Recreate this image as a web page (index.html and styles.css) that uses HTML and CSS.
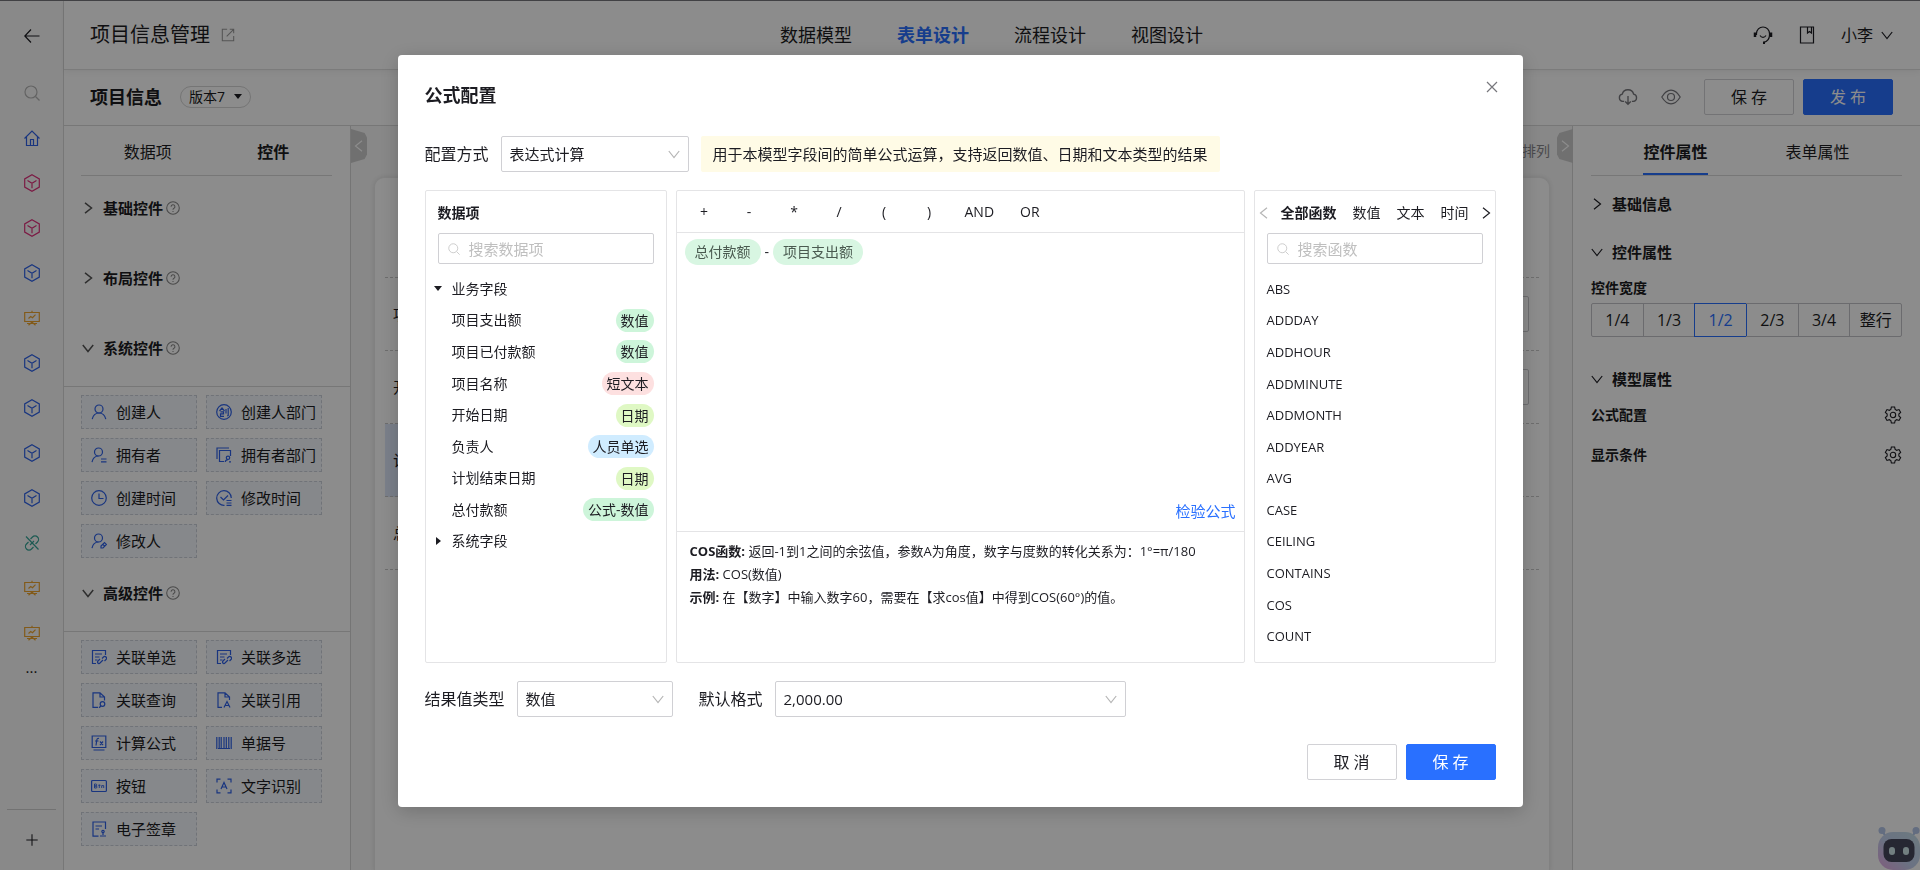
FILE: index.html
```html
<!DOCTYPE html>
<html lang="zh-CN">
<head>
  <meta charset="UTF-8">
  <meta name="viewport" content="width=device-width, initial-scale=1.0">
  <title>项目信息管理</title>
  <link rel="stylesheet" href="styles.css">
</head>

<body>
  <!-- icon set -->
  <svg class="sprite" aria-hidden="true">
    <symbol id="back" viewBox="0 0 16 16"><path d="M15.5 8H1M7 1.5L.8 8 7 14.500"/></symbol>
    <symbol id="search" viewBox="0 0 16 16"><circle cx="7" cy="7" r="6"/><path d="M11.500 11.500l4 4"/></symbol>
    <symbol id="home" viewBox="0 0 16 16"><path d="M.5 8.500L8 1l7.500 7.500M2.500 7v8.500h11V7M6.500 15.500V9.500h3v6"/></symbol>
    <symbol id="cube" viewBox="0 0 16 18"><path d="M8 .8l7.300 4.100v8.200L8 17.200.7 13.100V4.900zM3.500 6.500L8 9.200l4.500-2.700M8 9.200v5"/></symbol>
    <symbol id="board" viewBox="0 0 16 16"><path d="M.7 2.500h14.600v9H.7zM8 .8v1.700M4.500 8.500l2.200-2 1.800 1.200 3-3M4.500 15.200L8 12l3.500 3.200M3 13.500h10"/></symbol>
    <symbol id="unlink" viewBox="0 0 16 16"><path d="M6.500 4l2-2a3.500 3.500 0 0 1 5 5l-2 2M9.500 12l-2 2a3.500 3.500 0 0 1-5-5l2-2M2 1.500l12.500 13M6 10l4-4"/></symbol>
    <symbol id="plus" viewBox="0 0 16 16"><path d="M8 1.500v13M1.500 8h13"/></symbol>
    <symbol id="external" viewBox="0 0 16 16"><path d="M7 1.500H1.500v13h13V9M10 1.500h4.500V6M6.500 9.500l8-8"/></symbol>
    <symbol id="down" viewBox="0 0 12 12"><path d="M.8 3l5.200 6.500L11.200 3"/></symbol>
    <symbol id="right" viewBox="0 0 12 12"><path d="M3 .8L9.500 6 3 11.200"/></symbol>
    <symbol id="left" viewBox="0 0 12 12"><path d="M9 .8L2.500 6 9 11.200"/></symbol>
    <symbol id="close" viewBox="0 0 12 12"><path d="M1 1l10 10M11 1L1 11"/></symbol>
    <symbol id="help" viewBox="0 0 16 16"><circle cx="8" cy="8" r="7.200"/><path d="M5.800 6.500a2.200 2.200 0 1 1 3 2c-.6.300-.8.700-.8 1.500M8 11.300v1.200"/></symbol>
    <symbol id="headset" viewBox="0 0 20 18"><path d="M3.500 9V7.500a6.500 6.500 0 0 1 13 0V9c0 4-2.500 6.500-5.500 7.500M7 9.500c1.500 2.500 4.500 2.500 6 0"/><path d="M2 6.500v4.500M18 6.500v4.500M10 16.800h2" stroke-width="2.500"/></symbol>
    <symbol id="book" viewBox="0 0 16 18"><path d="M1.500 1h13v16h-13zM8.500 1v6l2-1.500 2 1.500V1"/></symbol>
    <symbol id="cloud" viewBox="0 0 18 15"><path d="M5.500 11.500H4.200a3.300 3.300 0 0 1-.4-6.500 5.300 5.300 0 0 1 10.300 0 3.300 3.300 0 0 1-.3 6.500h-1.300M9 6.500V14M6.500 11.500L9 14l2.500-2.500"/></symbol>
    <symbol id="eye" viewBox="0 0 20 16"><path d="M.8 8C3.500 3.500 6.500 1.200 10 1.200S16.500 3.500 19.200 8c-2.700 4.500-5.700 6.800-9.200 6.800S3.500 12.500.8 8z"/><circle cx="10" cy="8" r="3.500"/></symbol>
    <symbol id="gear" viewBox="0 0 20 20"><path d="M8.200 1.200h3.600l.6 2.600 1.700 1 2.600-.8 1.800 3.100-2 1.900v2l2 1.900-1.800 3.100-2.600-.8-1.700 1-.6 2.600H8.200l-.6-2.600-1.700-1-2.600.8-1.800-3.100 2-1.900V9l-2-1.900L3.300 4l2.600.8 1.700-1z"/><circle cx="10" cy="10" r="3"/></symbol>
    <symbol id="user" viewBox="0 0 16 16"><circle cx="8" cy="5" r="4"/><path d="M1.200 15.200C2 11.500 4.500 9 8 9s6 2.500 6.800 6.200"/></symbol>
    <symbol id="user-list" viewBox="0 0 16 16"><circle cx="7.500" cy="5" r="4"/><path d="M1 15.200C1.700 11.500 4 9 7.500 9M10 12h5.500M10 14.800h5.500"/></symbol>
    <symbol id="user-edit" viewBox="0 0 16 16"><circle cx="7.500" cy="5" r="4"/><path d="M1 15.200C1.700 11.500 4 9 7.500 9M10 15v-2l3.500-3.500 2 2L12 15zM12 11.500l1.800 1.800"/></symbol>
    <symbol id="dept" viewBox="0 0 16 16"><circle cx="8" cy="8" r="7.300"/><path d="M3.500 7L6 4l2.500 3M4.500 7.800h3v2h-3v2.500H8M10 5v4.500M12.200 4v7.500l-1 .6"/></symbol>
    <symbol id="dept-user" viewBox="0 0 16 16"><path d="M1 12V1h12M8 14.500H3.500v-11h11V9"/><circle cx="12" cy="10.800" r="1.700"/><path d="M9.200 15c.3-1.500 1.300-2.400 2.800-2.400M13 14.800h2"/></symbol>
    <symbol id="clock" viewBox="0 0 16 16"><circle cx="8" cy="8" r="7.300"/><path d="M8 3.500V8.500h4.500"/></symbol>
    <symbol id="clock-edit" viewBox="0 0 16 16"><path d="M8.500 15.300A7.300 7.300 0 1 1 15.300 8M4.500 7l3 3 4.500-4.500M10.500 10.500h5M10.500 13h5M10.500 15.300h5"/></symbol>
    <symbol id="form-link" viewBox="0 0 16 16"><path d="M5 14.500H1.500v-13h13V6M4 5h7M4 8h4.500M4 11h2.500"/><path d="M11 9.500l1.500-1.500a1.700 1.700 0 0 1 2.500 2.500l-1.500 1.500M12 11l-3.500 3.500a1.500 1.500 0 0 1-1.500-2.500l2-2"/></symbol>
    <symbol id="doc-search" viewBox="0 0 16 16"><path d="M7 15.300H2V.8h7L13.500 5v3.500M9 .8V5h4.500"/><circle cx="11.500" cy="12" r="2.300"/><path d="M10 14l-2 1.800"/></symbol>
    <symbol id="doc-a" viewBox="0 0 16 16"><path d="M6 15.300H2V.8h7L13.500 5v3M9 .8V5h4.500M8 15.500l3-6 3 6M9 13.500h4"/></symbol>
    <symbol id="fx" viewBox="0 0 16 16"><path d="M1.200 1h13.600v11.500H1.200zM2.500 15h11M8 3.500c-1.500-.5-2 .3-2.200 1.500L5 10.500M4 6h3.500M9 6.500l3 3.500M12 6.500L9 10"/></symbol>
    <symbol id="barcode" viewBox="0 0 16 16"><path d="M.8 2v12M3.200 2v12M5.200 2v12M8 2v12M10.300 2v12M12.800 2v12M15.200 2v12M2 13.500h12" stroke-width="1.200"/></symbol>
    <symbol id="btn" viewBox="0 0 16 16"><rect x=".6" y="2.500" width="14.800" height="11" rx="1"/><path stroke-width=".9" d="M3.500 6v4h1.500a1 1 0 0 0 0-2H3.500h1.300a1 1 0 0 0 0-2zM8.300 6.500v3.500M7.300 7.300h2.200M10.700 10V7.600h2V10"/></symbol>
    <symbol id="ocr" viewBox="0 0 16 16"><path d="M1 4.500V1.200h3.500M11.500 1.200H15v3.300M15 11.500v3.300h-3.500M4.500 14.800H1v-3.300M5 11l3-6.500L11 11M6 9h4"/></symbol>
    <symbol id="seal" viewBox="0 0 16 16"><path d="M7.500 15.200H2V1h12.500v7M4.500 5H11M4.500 8H8M9 15h6M12 14v-3"/><circle cx="12" cy="10.500" r="1.200"/></symbol>
  </svg>

  <div class="app">
    <nav class="rail">
      <a href="#" class="rail-back" aria-label="返回"><svg class="icon"><use href="#back"/></svg></a>
      <a href="#" class="rail-item muted" aria-label="搜索"><svg class="icon"><use href="#search"/></svg></a>
      <a href="#" class="rail-item blue" aria-label="首页"><svg class="icon"><use href="#home"/></svg></a>
      <a href="#" class="rail-item pink" aria-label="模型"><svg class="icon icon-cube"><use href="#cube"/></svg></a>
      <a href="#" class="rail-item pink" aria-label="模型"><svg class="icon icon-cube"><use href="#cube"/></svg></a>
      <a href="#" class="rail-item blue" aria-label="模型"><svg class="icon icon-cube"><use href="#cube"/></svg></a>
      <a href="#" class="rail-item orange" aria-label="报表"><svg class="icon"><use href="#board"/></svg></a>
      <a href="#" class="rail-item blue" aria-label="模型"><svg class="icon icon-cube"><use href="#cube"/></svg></a>
      <a href="#" class="rail-item blue" aria-label="模型"><svg class="icon icon-cube"><use href="#cube"/></svg></a>
      <a href="#" class="rail-item blue" aria-label="模型"><svg class="icon icon-cube"><use href="#cube"/></svg></a>
      <a href="#" class="rail-item blue" aria-label="模型"><svg class="icon icon-cube"><use href="#cube"/></svg></a>
      <a href="#" class="rail-item teal" aria-label="链接"><svg class="icon"><use href="#unlink"/></svg></a>
      <a href="#" class="rail-item orange" aria-label="报表"><svg class="icon"><use href="#board"/></svg></a>
      <a href="#" class="rail-item orange" aria-label="报表"><svg class="icon"><use href="#board"/></svg></a>
      <a href="#" class="rail-more">...</a>
      <button class="rail-add" aria-label="新增"><svg class="icon icon-14"><use href="#plus"/></svg></button>
    </nav>

    <div class="main">
      <header class="topbar">
        <div class="app-title">项目信息管理 <svg class="icon icon-14"><use href="#external"/></svg></div>
        <nav class="steps">
          <a href="#">数据模型</a>
          <a href="#" class="active">表单设计</a>
          <a href="#">流程设计</a>
          <a href="#">视图设计</a>
        </nav>
        <div class="top-tools">
          <svg class="icon icon-wide"><use href="#headset"/></svg>
          <svg class="icon icon-cube"><use href="#book"/></svg>
          <a href="#" class="user">小李 <svg class="icon icon-12"><use href="#down"/></svg></a>
        </div>
      </header>

      <div class="subbar">
        <h1>项目信息</h1>
        <button class="version">版本7 <span class="caret-down"></span></button>
        <div class="sub-tools">
          <svg class="icon icon-wide"><use href="#cloud"/></svg>
          <svg class="icon icon-wide"><use href="#eye"/></svg>
          <button class="btn">保 存</button>
          <button class="btn btn-primary">发 布</button>
        </div>
      </div>

      <div class="workspace">
        <aside class="widgets">
          <div class="widget-tabs">
            <a href="#">数据项</a>
            <a href="#" class="active">控件</a>
          </div>
          <h2 class="group-head"><svg class="icon icon-12"><use href="#right"/></svg>基础控件<svg class="icon icon-14"><use href="#help"/></svg></h2>
          <h2 class="group-head"><svg class="icon icon-12"><use href="#right"/></svg>布局控件<svg class="icon icon-14"><use href="#help"/></svg></h2>
          <h2 class="group-head"><svg class="icon icon-12"><use href="#down"/></svg>系统控件<svg class="icon icon-14"><use href="#help"/></svg></h2>
          <div class="group-body">
            <button class="widget"><svg class="icon"><use href="#user"/></svg>创建人</button>
            <button class="widget"><svg class="icon"><use href="#dept"/></svg>创建人部门</button>
            <button class="widget"><svg class="icon"><use href="#user-list"/></svg>拥有者</button>
            <button class="widget"><svg class="icon"><use href="#dept-user"/></svg>拥有者部门</button>
            <button class="widget"><svg class="icon"><use href="#clock"/></svg>创建时间</button>
            <button class="widget"><svg class="icon"><use href="#clock-edit"/></svg>修改时间</button>
            <button class="widget"><svg class="icon"><use href="#user-edit"/></svg>修改人</button>
          </div>
          <h2 class="group-head"><svg class="icon icon-12"><use href="#down"/></svg>高级控件<svg class="icon icon-14"><use href="#help"/></svg></h2>
          <div class="group-body">
            <button class="widget"><svg class="icon"><use href="#form-link"/></svg>关联单选</button>
            <button class="widget"><svg class="icon"><use href="#form-link"/></svg>关联多选</button>
            <button class="widget"><svg class="icon"><use href="#doc-search"/></svg>关联查询</button>
            <button class="widget"><svg class="icon"><use href="#doc-a"/></svg>关联引用</button>
            <button class="widget"><svg class="icon"><use href="#fx"/></svg>计算公式</button>
            <button class="widget"><svg class="icon"><use href="#barcode"/></svg>单据号</button>
            <button class="widget"><svg class="icon"><use href="#btn"/></svg>按钮</button>
            <button class="widget"><svg class="icon"><use href="#ocr"/></svg>文字识别</button>
            <button class="widget"><svg class="icon"><use href="#seal"/></svg>电子签章</button>
          </div>
        </aside>

        <section class="canvas">
          <button class="fold fold-left" aria-label="收起"><svg class="icon icon-12"><use href="#left"/></svg></button>
          <button class="fold fold-right" aria-label="收起"><svg class="icon icon-12"><use href="#right"/></svg></button>
          <div class="canvas-bar">排列</div>
          <div class="form-card">
            <div class="form-grid">
              <label class="cell">项目名称 <input type="text"></label>
              <label class="cell">项目支出额 <input type="text"></label>
              <label class="cell">开始日期 <input type="text"></label>
              <label class="cell">计划结束日期 <input type="text"></label>
              <div class="cell selected">计算公式</div>
              <div class="cell"></div>
              <div class="cell">总付款额</div>
              <div class="cell"></div>
            </div>
          </div>
        </section>

        <aside class="props">
          <div class="prop-tabs">
            <a href="#" class="active">控件属性</a>
            <a href="#">表单属性</a>
          </div>
          <h2 class="prop-head"><svg class="icon icon-12"><use href="#right"/></svg>基础信息</h2>
          <h2 class="prop-head"><svg class="icon icon-12"><use href="#down"/></svg>控件属性</h2>
          <div class="prop-name">控件宽度</div>
          <div class="widths">
            <label><input type="radio" name="width">1/4</label>
            <label><input type="radio" name="width">1/3</label>
            <label><input type="radio" name="width" checked>1/2</label>
            <label><input type="radio" name="width">2/3</label>
            <label><input type="radio" name="width">3/4</label>
            <label><input type="radio" name="width">整行</label>
          </div>
          <h2 class="prop-head"><svg class="icon icon-12"><use href="#down"/></svg>模型属性</h2>
          <div class="prop-row">公式配置 <button aria-label="公式配置"><svg class="icon icon-18"><use href="#gear"/></svg></button></div>
          <div class="prop-row">显示条件 <button aria-label="显示条件"><svg class="icon icon-18"><use href="#gear"/></svg></button></div>
        </aside>
      </div>
    </div>
  </div>

  <svg class="robot" viewBox="0 0 42 43" aria-hidden="true">
    <defs>
      <linearGradient id="shell" x1="0" y1="1" x2="1" y2="0">
        <stop offset="0" stop-color="#e9a8e4"/>
        <stop offset=".45" stop-color="#c3d0ee"/>
        <stop offset="1" stop-color="#c6dfe9"/>
      </linearGradient>
    </defs>
    <path d="M4 4l5 7M38 4l-5 7" stroke="#a9bfe6" stroke-width="2"/>
    <circle cx="4" cy="3.500" r="3.500" fill="#b5c6ea"/>
    <circle cx="38" cy="3.500" r="3.500" fill="#b5c6ea"/>
    <rect x="0" y="5" width="42" height="38" rx="15" fill="url(#shell)"/>
    <rect x="5.500" y="12" width="31" height="23" rx="8" fill="#46475c"/>
    <rect x="11" y="20" width="6" height="8" rx="3" fill="#cfe7ea"/>
    <rect x="25" y="20" width="6" height="8" rx="3" fill="#cfe7ea"/>
  </svg>

  <div class="mask">
    <div class="modal" role="dialog" aria-labelledby="modalTitle">
      <button class="modal-close" aria-label="关闭"><svg class="icon icon-12"><use href="#close"/></svg></button>
      <h2 class="modal-title" id="modalTitle">公式配置</h2>

      <div class="modal-row">
        <label for="mode">配置方式</label>
        <div class="select select-mode">
          <select id="mode"><option>表达式计算</option></select>
          <svg class="icon icon-12"><use href="#down"/></svg>
        </div>
        <div class="hint">用于本模型字段间的简单公式运算，支持返回数值、日期和文本类型的结果</div>
      </div>

      <div class="panels">
        <div class="panel side">
          <div class="panel-title">数据项</div>
          <div class="search">
            <svg class="icon icon-12"><use href="#search"/></svg>
            <input type="text" placeholder="搜索数据项" aria-label="搜索数据项">
          </div>
          <ul class="list fields">
            <li><span class="caret-down"></span>业务字段</li>
            <li>项目支出额 <span class="tag green">数值</span></li>
            <li>项目已付款额 <span class="tag green">数值</span></li>
            <li>项目名称 <span class="tag red">短文本</span></li>
            <li>开始日期 <span class="tag lime">日期</span></li>
            <li>负责人 <span class="tag sky">人员单选</span></li>
            <li>计划结束日期 <span class="tag lime">日期</span></li>
            <li>总付款额 <span class="tag green">公式-数值</span></li>
            <li><span class="caret-right"></span>系统字段</li>
          </ul>
        </div>

        <div class="panel editor">
          <div class="operators">
            <button>+</button>
            <button>-</button>
            <button>*</button>
            <button>/</button>
            <button>(</button>
            <button>)</button>
            <button>AND</button>
            <button>OR</button>
          </div>
          <div class="formula">
            <span class="chip">总付款额</span>
            <span>-</span>
            <span class="chip">项目支出额</span>
            <a href="#" class="check">检验公式</a>
          </div>
          <div class="doc">
            <p><b>COS函数:</b> 返回-1到1之间的余弦值，参数A为角度，数字与度数的转化关系为：1°=π/180</p>
            <p><b>用法:</b> COS(数值)</p>
            <p><b>示例:</b> 在【数字】中输入数字60，需要在【求cos值】中得到COS(60°)的值。</p>
          </div>
        </div>

        <div class="panel side">
          <div class="fn-tabs">
            <button class="muted" aria-label="上一页"><svg class="icon icon-12"><use href="#left"/></svg></button>
            <div class="fn-names">
              <a href="#" class="active">全部函数</a>
              <a href="#">数值</a>
              <a href="#">文本</a>
              <a href="#">时间</a>
            </div>
            <button aria-label="下一页"><svg class="icon icon-12"><use href="#right"/></svg></button>
          </div>
          <div class="search">
            <svg class="icon icon-12"><use href="#search"/></svg>
            <input type="text" placeholder="搜索函数" aria-label="搜索函数">
          </div>
          <ul class="list functions">
            <li>ABS</li>
            <li>ADDDAY</li>
            <li>ADDHOUR</li>
            <li>ADDMINUTE</li>
            <li>ADDMONTH</li>
            <li>ADDYEAR</li>
            <li>AVG</li>
            <li>CASE</li>
            <li>CEILING</li>
            <li>CONTAINS</li>
            <li>COS</li>
            <li>COUNT</li>
          </ul>
        </div>
      </div>

      <div class="modal-row">
        <label for="resultType">结果值类型</label>
        <div class="select select-type">
          <select id="resultType"><option>数值</option></select>
          <svg class="icon icon-12"><use href="#down"/></svg>
        </div>
        <label for="format" class="second-label">默认格式</label>
        <div class="select select-format">
          <select id="format"><option>2,000.00</option></select>
          <svg class="icon icon-12"><use href="#down"/></svg>
        </div>
      </div>

      <div class="modal-foot">
        <button class="btn">取 消</button>
        <button class="btn btn-primary">保 存</button>
      </div>
    </div>
  </div>
</body>
</html>
```

FILE: styles.css
```css
* {
  box-sizing: border-box;
}
body {
  margin: 0;
  font-family: "Open Sans", "Noto Sans CJK SC", sans-serif;
  font-size: 15px;
  font-weight: 400;
  line-height: 20px;
  color: #1c1c22;
  overflow: hidden;
}
h1, h2, p, ul {
  margin: 0;
  padding: 0;
}
ul {
  list-style: none;
}
a {
  color: inherit;
  text-decoration: none;
}
button, input, select {
  font: inherit;
  color: inherit;
}
button {
  padding: 0;
  border: none;
  background: none;
  cursor: pointer;
}

/* icons */
.sprite {
  display: none;
}
.icon {
  display: block;
  flex: none;
  width: 16px;
  height: 16px;
  fill: none;
  stroke: currentColor;
  stroke-width: 1.2;
}
.icon-12 {
  width: 12px;
  height: 12px;
}
.icon-14 {
  width: 14px;
  height: 14px;
}
.icon-18 {
  width: 18px;
  height: 18px;
}
.icon-cube {
  height: 18px;
}
.icon-wide {
  width: 20px;
  height: 18px;
}
.caret-down {
  border: 4px solid transparent;
  border-top: 5px solid currentColor;
  border-bottom: none;
}
.caret-right {
  border: 4px solid transparent;
  border-left: 5px solid currentColor;
  border-right: none;
}

/* page */
.app {
  display: flex;
  height: 100vh;
  border-top: 1px solid #77777c;
  background: #fff;
  overflow: hidden;
}
.rail {
  width: 64px;
  flex: none;
  display: flex;
  flex-direction: column;
  align-items: center;
  background: #fafafa;
  border-right: 1px solid #d9d9d9;
}
.rail-back {
  height: 69px;
  display: flex;
  align-items: center;
}
.rail-item {
  height: 45px;
  display: flex;
  align-items: center;
}
.rail-more {
  line-height: 24px;
}
.rail-add {
  width: 49px;
  height: 61px;
  margin-top: auto;
  display: flex;
  align-items: center;
  justify-content: center;
  border-top: 1px solid #d0d0d0;
}
.muted {
  color: #b5b5b5;
}
.blue {
  color: #2e62e8;
}
.pink {
  color: #e0307c;
}
.orange {
  color: #eda52e;
}
.teal {
  color: #35a597;
}
.main {
  flex: 1;
  min-width: 0;
  display: flex;
  flex-direction: column;
}
.topbar {
  display: grid;
  grid-template-columns: 1fr auto 1fr;
  align-items: center;
  height: 69px;
  padding: 0 27px 0 26px;
  border-bottom: 1px solid #e0e0e0;
  box-shadow: 0 2px 6px rgba(0, 0, 0, 0.06);
}
.app-title {
  display: flex;
  align-items: center;
  gap: 11px;
  font-size: 20px;
}
.app-title .icon {
  color: #999;
}
.steps {
  display: flex;
  gap: 45px;
  font-size: 18px;
}
.steps .active {
  color: #2970ff;
  font-weight: 700;
}
.top-tools {
  display: flex;
  align-items: center;
  justify-content: flex-end;
  gap: 26px;
  font-size: 16px;
}
.user {
  display: flex;
  align-items: center;
  gap: 8px;
}
.subbar {
  display: flex;
  align-items: center;
  height: 56px;
  padding: 0 27px 2px 26px;
  border-bottom: 1px solid #d9d9d9;
}
.subbar h1 {
  font-size: 18px;
}
.version {
  display: flex;
  align-items: center;
  gap: 9px;
  margin-left: 18px;
  padding: 0 8px;
  border: 1px solid #d5d5d5;
  border-radius: 11px;
  font-size: 14px;
}
.sub-tools {
  display: flex;
  align-items: center;
  gap: 23px;
  margin-left: auto;
  color: #77777c;
}
.sub-tools .btn + .btn {
  margin-left: -14px;
}
.btn {
  width: 90px;
  height: 36px;
  border: 1px solid #d2d2d6;
  border-radius: 2px;
  background: #fff;
  color: #1c1c22;
  font-size: 16px;
}
.btn-primary {
  border-color: #2970ff;
  background: #2970ff;
  color: #fff;
}
.workspace {
  flex: 1;
  min-height: 0;
  display: flex;
}

/* widget list */
.widgets {
  width: 287px;
  flex: none;
  border-right: 1px solid #d5d5d5;
}
.widget-tabs {
  display: flex;
  justify-content: space-around;
  margin: 0 18px 0 17px;
  padding: 16px 0 13px;
  border-bottom: 1px solid #d9d9d9;
  font-size: 16px;
}
.active {
  font-weight: 700;
}
.group-head {
  display: flex;
  align-items: center;
  height: 64px;
  margin-bottom: 6px;
  padding-left: 18px;
  font-size: 15px;
}
.group-head .icon:first-child {
  margin-right: 9px;
  color: #555;
  stroke-width: 1.5;
}
.group-head .icon:last-child {
  margin-left: 3px;
  color: #888;
}
.group-body {
  display: grid;
  grid-template-columns: 116px 116px;
  gap: 9px;
  margin-bottom: 3px;
  padding: 8px 17px 0;
  border-top: 1px solid #d9d9d9;
}
.widget {
  display: flex;
  align-items: center;
  gap: 9px;
  height: 34px;
  padding-left: 9px;
  border: 1px dashed #cdd1da;
  background: #f4f7fe;
  white-space: nowrap;
}
.widget .icon {
  color: #2e62e8;
}

/* form canvas */
.canvas {
  position: relative;
  flex: 1;
  min-width: 0;
  display: flex;
  flex-direction: column;
  padding: 0 22px 0 23px;
  background: #f7f7f7;
}
.fold {
  position: absolute;
  top: 3px;
  width: 16px;
  height: 34px;
  display: flex;
  align-items: center;
  justify-content: center;
  background: #ccc;
  color: #fff;
}
.fold-left {
  left: 0;
  clip-path: polygon(0 0, 85% 12%, 100% 25%, 100% 75%, 85% 88%, 0 100%);
}
.fold-right {
  right: -1px;
  clip-path: polygon(100% 0, 15% 12%, 0 25%, 0 75%, 15% 88%, 100% 100%);
}
.canvas-bar {
  height: 51px;
  line-height: 50px;
  text-align: right;
  font-size: 14px;
  color: #88888c;
}
.form-card {
  flex: 1;
  padding: 99px 10px 0;
  border: 1px solid #ececec;
  border-bottom: none;
  border-radius: 10px 10px 0 0;
  background: #fff;
  box-shadow: 0 0 4px rgba(0, 0, 0, 0.1);
}
.form-grid {
  display: grid;
  grid-template-columns: 1fr 1fr;
  border-top: 1px dashed #c8c8c8;
}
.cell {
  display: flex;
  align-items: center;
  gap: 12px;
  height: 73px;
  padding: 0 10px 0 8px;
  border-bottom: 1px dashed #c8c8c8;
}
.cell input {
  flex: 1;
  height: 36px;
  border: 1px solid #c8c8cc;
  border-radius: 2px;
}
.selected {
  background: #dfe9fb;
}

/* properties */
.props {
  width: 348px;
  flex: none;
  padding: 0 18px;
  border-left: 1px solid #d5d5d5;
}
.prop-tabs {
  display: flex;
  justify-content: center;
  gap: 78px;
  margin-bottom: 4px;
  border-bottom: 1px solid #d9d9d9;
  font-size: 16px;
}
.prop-tabs a {
  padding: 16px 0 11px;
  border-bottom: 2px solid transparent;
}
.prop-tabs .active {
  border-color: #2970ff;
}
.prop-head {
  display: flex;
  align-items: center;
  gap: 9px;
  height: 48px;
  font-size: 15px;
}
.prop-name {
  margin-top: 2px;
  font-size: 14px;
  font-weight: 700;
}
.widths {
  display: flex;
  margin: 5px 0 18px;
  border: 1px solid #c4c4c8;
  border-radius: 2px;
}
.widths label {
  flex: 1;
  line-height: 32px;
  text-align: center;
  font-size: 16px;
}
.widths label + label {
  border-left: 1px solid #c4c4c8;
}
.widths input {
  position: absolute;
  opacity: 0;
}
.widths label:has(input:checked) {
  position: relative;
  border-color: #2970ff;
  color: #2970ff;
  box-shadow: 0 -1px #2970ff, 0 1px #2970ff, 1px 0 #2970ff;
}
.prop-row {
  display: flex;
  align-items: center;
  justify-content: space-between;
  margin: 2px 0 20px;
  font-size: 14px;
  font-weight: 700;
}

.robot {
  position: fixed;
  right: 0;
  bottom: 0;
  width: 42px;
  height: 43px;
}

/* modal */
.mask {
  position: fixed;
  inset: 0;
  display: flex;
  justify-content: center;
  align-items: flex-start;
  padding-top: 55px;
  background: rgba(0, 0, 0, 0.45);
}
.modal {
  position: relative;
  width: 90%;
  max-width: 1125px;
  padding: 27px;
  border-radius: 4px;
  background: #fff;
  box-shadow: 0 4px 20px rgba(0, 0, 0, 0.2);
}
.modal-close {
  position: absolute;
  top: 26px;
  right: 25px;
  color: #77777c;
}
.modal-title {
  line-height: 26px;
  margin-bottom: 28px;
  font-size: 18px;
}
.modal-row {
  display: flex;
  align-items: center;
  gap: 12px;
  font-size: 16px;
}
.select {
  position: relative;
  font-size: 15px;
}
.select select {
  width: 100%;
  height: 36px;
  padding: 0 8px;
  border: 1px solid #d0d0d4;
  border-radius: 2px;
  background: #fff;
  appearance: none;
}
.select .icon {
  position: absolute;
  top: 12px;
  right: 9px;
  color: #b5b5b5;
  pointer-events: none;
}
.select-mode {
  width: 188px;
}
.select-type {
  width: 156px;
}
.select-format {
  width: 351px;
}
.second-label {
  margin-left: 14px;
}
.hint {
  padding: 0 12px;
  border-radius: 2px;
  background: #fffbe6;
  font-size: 15px;
  line-height: 36px;
}
.panels {
  display: flex;
  gap: 9px;
  margin: 18px 0;
}
.panel {
  display: flex;
  flex-direction: column;
  min-height: 473px;
  border: 1px solid #e4e4e6;
  border-radius: 2px;
  font-size: 14px;
}
.side {
  width: 242px;
  flex: none;
  padding: 12px 12px 10px;
}
.panel-title {
  font-weight: 700;
}
.search {
  display: flex;
  align-items: center;
  gap: 9px;
  height: 31px;
  margin: 10px 0 9px;
  padding-left: 9px;
  border: 1px solid #d0d0d4;
  border-radius: 2px;
  font-size: 15px;
}
.search .icon {
  color: #c8c8c8;
}
.search input {
  flex: 1;
  min-width: 0;
  padding: 0;
  border: none;
  outline: none;
}
.search input::placeholder {
  color: #bfbfbf;
}
.list {
  flex: 1;
  display: grid;
  grid-template-rows: repeat(12, 1fr);
}
.list li {
  display: flex;
  align-items: center;
}
.functions {
  font-size: 13px;
}
.fields li {
  padding-left: 14px;
}
.fields .caret-down {
  margin: 0 10px 0 -18px;
}
.fields .caret-right {
  margin: 0 11px 0 -16px;
}
.tag {
  margin-left: auto;
  padding: 0 5px;
  border-radius: 12px;
  line-height: 23px;
}
.green {
  background: #cdf5da;
}
.red {
  background: #fde0e0;
}
.lime {
  background: #dff8c4;
}
.sky {
  background: #d0ecff;
}
.editor {
  flex: 1;
  min-width: 0;
}
.operators {
  display: flex;
  height: 42px;
  padding-left: 5px;
  border-bottom: 1px solid #e4e4e6;
}
.operators button {
  min-width: 45px;
  padding: 0 13px;
}
.formula {
  position: relative;
  flex: 1;
  display: flex;
  align-items: flex-start;
  gap: 4px;
  padding: 6px 8px;
  line-height: 26px;
}
.chip {
  padding: 0 10px;
  border-radius: 13px;
  background: #d8f6e2;
  color: #4a5a50;
}
.check {
  position: absolute;
  right: 8px;
  bottom: 8px;
  color: #2970ff;
  font-size: 15px;
  line-height: 24px;
}
.doc {
  height: 131px;
  padding: 8px 13px;
  border-top: 1px solid #e4e4e6;
  font-size: 13px;
  line-height: 23px;
}
.fn-tabs {
  display: flex;
  align-items: center;
  justify-content: space-between;
  margin: 0 -9px;
}
.fn-names {
  display: flex;
  gap: 16px;
}
.modal-foot {
  display: flex;
  justify-content: flex-end;
  gap: 9px;
  margin-top: 27px;
}
```
